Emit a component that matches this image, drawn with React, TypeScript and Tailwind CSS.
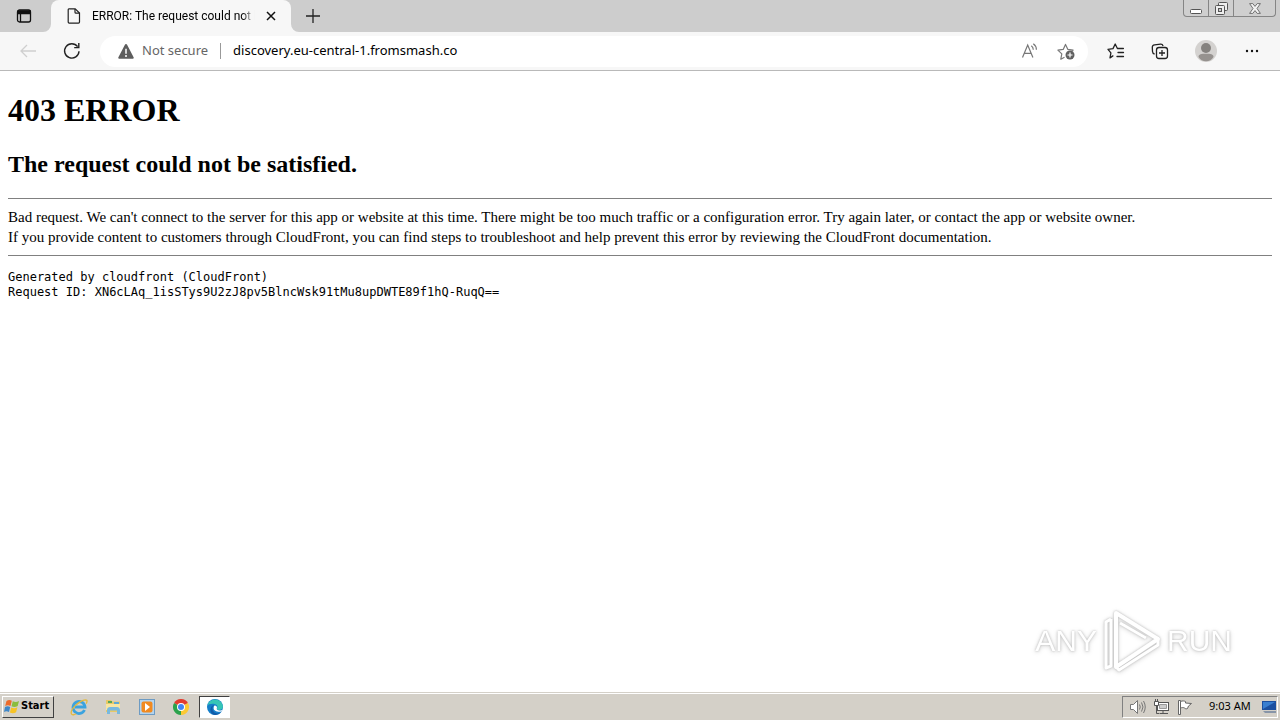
import type { ReactNode } from "react";

const uiFont = "font-['Noto_Sans','Open_Sans',sans-serif]";

function IconButton({ label, className, children }: { label: string; className: string; children: ReactNode }) {
  return (
    <button aria-label={label} className={`flex shrink-0 items-center justify-center ${className}`}>
      {children}
    </button>
  );
}

function TabStrip() {
  return (
    <header className="flex h-8 items-start bg-[#cdcdcd]">
      <IconButton label="Tab actions menu" className="h-8 w-[51px] rounded-br-lg pr-1">
        <svg width="16" height="16" viewBox="0 0 16 16" fill="none" stroke="#111" strokeWidth="1.3">
          <rect x="1.5" y="2" width="13" height="12" rx="2" />
          <path d="M2 3h12v2.5H2z" fill="#111" />
          <path d="M4.5 5v9" />
        </svg>
      </IconButton>
      <div className="relative flex h-8 w-60 items-center rounded-t-lg bg-[#f7f7f7] pr-3 pl-4">
        <svg className="absolute bottom-0 -left-2" width="8" height="8" viewBox="0 0 8 8"><path d="M8 0v8H0a8 8 0 0 0 8-8z" fill="#f7f7f7" /></svg>
        <svg className="absolute -right-2 bottom-0" width="8" height="8" viewBox="0 0 8 8"><path d="M0 0v8h8a8 8 0 0 1-8-8z" fill="#f7f7f7" /></svg>
        <svg className="shrink-0" width="14" height="16" viewBox="0 0 14 16" fill="none" stroke="#222" strokeWidth="1.2">
          <path d="M2.500 .8h5.700l4.300 4.300v9a1 1 0 0 1-1 1H2.200a1 1 0 0 1-1-1V1.800a1 1 0 0 1 1.300-1z" />
          <path d="M8 1v3.200a1 1 0 0 0 1 1h3.400" />
        </svg>
        <span className="ml-[11px] w-[167px] overflow-hidden font-['Roboto',sans-serif] text-xs whitespace-nowrap text-black [mask-image:linear-gradient(to_right,black_92%,transparent)]">
          ERROR: The request could not be satisfied
        </span>
        <IconButton label="Close tab" className="ml-2 size-4">
          <svg width="10" height="10" viewBox="0 0 10 10" stroke="#111" strokeWidth="1.5"><path d="M1 1l8 8M9 1L1 9" /></svg>
        </IconButton>
      </div>
      <IconButton label="New tab" className="h-8 w-11">
        <svg width="14" height="14" viewBox="0 0 14 14" stroke="#222" strokeWidth="1.3"><path d="M7 0v14M0 7h14" /></svg>
      </IconButton>
      <div className="mr-1 ml-auto flex h-[17px] overflow-hidden rounded-b border border-t-0 border-[#858585] bg-[#cfcfcf]">
        <IconButton label="Minimize" className="w-[25px] border-r border-[#858585]">
          <svg width="13" height="15" viewBox="0 0 13 15" fill="#fff" stroke="#555"><rect x=".5" y="8.5" width="11" height="4" rx="1" /></svg>
        </IconButton>
        <IconButton label="Restore" className="w-[25px] border-r border-[#858585]">
          <svg width="13" height="13" viewBox="0 0 13 13" fill="#eee" stroke="#555">
            <rect x="3.5" y=".5" width="9" height="8" rx="1" />
            <rect x=".5" y="3.5" width="9" height="9" rx="1" />
            <rect x="3.5" y="6.5" width="3" height="3" fill="#ccc" />
          </svg>
        </IconButton>
        <IconButton label="Close" className="w-[41px]">
          <svg width="12" height="11" viewBox="0 0 12 11" fill="#f2f2f2" stroke="#666" strokeWidth=".9">
            <path d="M.6.6h3.2L6 3.4 8.2.6h3.2L8 5.5l3.4 4.9H8.2L6 7.6l-2.2 2.8H.6L4 5.5z" />
          </svg>
        </IconButton>
      </div>
    </header>
  );
}

function Toolbar() {
  return (
    <nav className="flex h-[39px] items-center border-b border-[#b9b9b9] bg-[#f7f7f7] pr-1.5">
      <IconButton label="Back" className="ml-1.5 h-8 w-11">
        <svg width="16" height="14" viewBox="0 0 16 14" fill="none" stroke="#cfcfcf" strokeWidth="1.3"><path d="M16 7H1M7 1L1 7l6 6" /></svg>
      </IconButton>
      <IconButton label="Refresh" className="h-8 w-11">
        <svg width="18" height="18" viewBox="0 0 18 18" fill="none" stroke="#222" strokeWidth="1.4"><path d="M16 9.2A7.2 7.2 0 1 1 14.6 4.6" /><path d="M15.8 1v4.6h-4.6" /></svg>
      </IconButton>
      <div className="ml-1.5 flex h-[31px] min-w-0 flex-1 items-center rounded-full bg-white pr-1 pl-[18px]">
        <button className={`flex shrink-0 items-center gap-2 text-[13px] text-[#666] ${uiFont}`}>
          <svg width="16" height="15" viewBox="0 0 16 15">
            <path d="M6.9.8a1.2 1.2 0 0 1 2.2 0l6.5 12.4a1.1 1.1 0 0 1-1 1.6H1.4a1.1 1.1 0 0 1-1-1.6z" fill="#5d5d5d" />
            <path d="M8 4.8v5" stroke="#fff" strokeWidth="1.5" />
            <circle cx="8" cy="12" r="1" fill="#fff" />
          </svg>
          Not secure
        </button>
        <span className="mx-3 h-4 w-px shrink-0 bg-[#999]" />
        <input aria-label="Address" readOnly value="discovery.eu-central-1.fromsmash.co" className={`min-w-0 flex-1 bg-transparent text-[13px] text-black outline-none ${uiFont}`} />
        <IconButton label="Read aloud" className="w-9">
          <svg width="18" height="16" viewBox="0 0 18 16" fill="none" stroke="#777" strokeWidth="1.2">
            <path d="M1.5 14.5L6.7 2l5.2 12.5M3.2 10.4h7" />
            <path d="M10.3 2.8c1.3.9 2 2.200 2 3.900M12.300.7c2 1.400 3.100 3.500 3.100 6" />
          </svg>
        </IconButton>
        <IconButton label="Add to favorites" className="w-9">
          <svg width="18" height="18" viewBox="0 0 18 18" fill="none">
            <path d="M7.500 15.200l-3.700 2 1-5.300L.9 8.100l5.300-.7L8.500 2.400l2.400 5 5.200.7-1.200 1.200" stroke="#777" strokeWidth="1.2" strokeLinejoin="round" />
            <circle cx="13" cy="13" r="4.500" fill="#606060" />
            <path d="M13 10.500v5M10.500 13h5" stroke="#fff" strokeWidth="1.200" />
          </svg>
        </IconButton>
      </div>
      <IconButton label="Favorites" className="ml-1.5 h-8 w-11">
        <svg width="18" height="18" viewBox="0 0 18 18" fill="none" stroke="#222" strokeWidth="1.300" strokeLinejoin="round" strokeLinecap="round">
          <path d="M5.900 13.900l-2.900 2 .9-5.100L1 7.300l5-.7L8.200 2l2.200 4.500h6M11 10.500h5.500M10 14.500h6.500" />
        </svg>
      </IconButton>
      <IconButton label="Collections" className="h-8 w-11">
        <svg width="18" height="18" viewBox="0 0 18 18" fill="none" stroke="#222" strokeWidth="1.300">
          <path d="M3.600 12A2.500 2.500 0 0 1 1.500 9.600l-.2-4.200A2.500 2.500 0 0 1 3.600 2.800l6-.6c1.300-.1 2.100.6 2.500 1.800" />
          <rect x="5.500" y="5.500" width="11" height="11" rx="2.500" />
          <path d="M11 8v6M8 11h6" />
        </svg>
      </IconButton>
      <IconButton label="Profile" className="h-8 w-12">
        <svg width="22" height="22" viewBox="0 0 22 22">
          <circle cx="11" cy="11" r="11" fill="#d4d2d0" />
          <circle cx="11" cy="8" r="5" fill="#85827f" />
          <path d="M3.500 17c0-3 3-3.300 7.500-3.300s7.500.3 7.500 3.300c-1.500 2.800-4.300 4.300-7.500 4.300S5 19.800 3.500 17z" fill="#96928f" />
        </svg>
      </IconButton>
      <IconButton label="Settings and more" className="h-8 w-11">
        <svg width="14" height="4" viewBox="0 0 14 4" fill="#111"><circle cx="2" cy="2" r="1.200" /><circle cx="7" cy="2" r="1.200" /><circle cx="12" cy="2" r="1.200" /></svg>
      </IconButton>
    </nav>
  );
}

function Watermark() {
  return (
    <div className="absolute right-12 bottom-5 flex items-center gap-1.5 font-['Liberation_Sans',sans-serif] text-[30px] leading-none text-white [filter:drop-shadow(0_0_1px_#bbb)_drop-shadow(0_1px_2px_#ddd)]">
      <span>ANY</span>
      <svg width="58" height="62" viewBox="0 0 58 62" fill="none" stroke="#fff" strokeWidth="4" strokeLinejoin="round">
        <path d="M13 3l42 26-42 28z" />
        <path d="M8 9L3 12v46l5-2V9M17 13l26 15M13 57l3 3 39-25v-6" strokeWidth="3" />
      </svg>
      <span>RUN</span>
    </div>
  );
}

function ErrorPage() {
  return (
    <main className="relative flex-1 bg-white px-2 font-['Liberation_Serif',serif] text-[15px] leading-5 text-black">
      <h1 className="pt-[21px] text-[32px] leading-[37px] font-bold">403 ERROR</h1>
      <h2 className="mt-[21px] text-2xl leading-7 font-bold">The request could not be satisfied.</h2>
      <hr className="mt-5 mb-2 border-[#808080]" />
      <p>
        Bad request. We can't connect to the server for this app or website at this time. There might be too much traffic or a configuration error. Try again later, or contact the app or website owner.
        <br />
        If you provide content to customers through CloudFront, you can find steps to troubleshoot and help prevent this error by reviewing the CloudFront documentation.
      </p>
      <hr className="mt-2 mb-[14px] border-[#808080]" />
      <pre className="font-['DejaVu_Sans_Mono',monospace] text-xs leading-[15px]">{"Generated by cloudfront (CloudFront)\nRequest ID: XN6cLAq_1isSTys9U2zJ8pv5BlncWsk91tMu8upDWTE89f1hQ-RuqQ=="}</pre>
      <Watermark />
    </main>
  );
}

function Taskbar() {
  return (
    <footer className="flex h-7 items-center border-t border-[#d4d0c8] bg-[#d4d0c8] shadow-[inset_0_1px_0_#fff]">
      <button className="ml-0.5 flex h-[22px] w-[52px] items-center gap-px border border-t-white border-r-[#404040] border-b-[#404040] border-l-white pl-px font-['DejaVu_Sans_Condensed','DejaVu_Sans',sans-serif] text-[11px] font-bold text-black">
        <svg className="shrink-0" width="16" height="15" viewBox="0 0 16 15">
          <path d="M2.500 2C4.500.8 6 .8 7.800 1.800L6.500 7C4.700 6 3 6 1.200 7z" fill="#ed6b2b" />
          <path d="M8.800 2.200c2 1 4 1 6.200-.2L13.700 7c-2.200 1.300-4 1.300-6.200.3z" fill="#8bbd3e" />
          <path d="M1 8c1.800-1 3.400-1 5.200 0L5 13c-1.800-1-3.400-1-5 0z" fill="#3f87c8" />
          <path d="M7.200 8.400c2.200 1 4 1 6.200-.2l-1.300 5c-2.200 1.200-4 1.200-6.200.2z" fill="#f7c325" />
        </svg>
        Start
      </button>
      <div className="ml-2 flex items-center">
        <IconButton label="Internet Explorer" className="h-[22px] w-[34px]">
          <svg width="18" height="18" viewBox="0 0 18 18" fill="none">
            <path d="M14.500 12a6 6 0 1 1 .5-3H5" stroke="#3ba3df" strokeWidth="2.800" />
            <path d="M1.500 16C-.5 12 9 2.500 15.500 1.800c2.500 0 1.300 2.700.7 3.800M1.500 16c.8 1.500 3 .6 4.500-.3" stroke="#e5b93c" strokeWidth="1.300" />
          </svg>
        </IconButton>
        <IconButton label="File Explorer" className="h-[22px] w-[34px]">
          <svg width="17" height="17" viewBox="0 0 17 17">
            <path d="M1 2h5l1.500 1.500H15V14H1z" fill="#e8c967" />
            <path d="M3 3h4v2H3z" fill="#58a659" /><path d="M9 4h5v2H9z" fill="#5fa9d5" />
            <path d="M1 6h14v6H1z" fill="#f8e6a2" />
            <path d="M2 16v-4c0-2 1.500-3 3-3h7c1.500 0 3 1 3 3v4h-3v-3.500H5V16z" fill="#78b9df" />
          </svg>
        </IconButton>
        <IconButton label="Media Player" className="h-[22px] w-[34px]">
          <svg width="16" height="16" viewBox="0 0 16 16">
            <rect x=".5" y=".5" width="15" height="15" fill="#b4d4ee" stroke="#6d9bc3" />
            <rect x="2.500" y="2.500" width="11" height="11" rx="2" fill="#f18a20" />
            <path d="M6 4l5 4-5 4z" fill="#fff" />
          </svg>
        </IconButton>
        <IconButton label="Chrome" className="h-[22px] w-[34px]">
          <svg width="16" height="16" viewBox="0 0 16 16">
            <path d="M8 8L1.070 4A8 8 0 0 1 14.930 4z" fill="#e33b2e" />
            <path d="M8 8V16A8 8 0 0 1 1.070 4z" fill="#2ba24c" />
            <path d="M8 8l6.930-4A8 8 0 0 1 8 16z" fill="#fcc934" />
            <circle cx="8" cy="8" r="4" fill="#fff" /><circle cx="8" cy="8" r="3" fill="#4285f4" />
          </svg>
        </IconButton>
        <IconButton label="Microsoft Edge" className="ml-px h-[22px] w-[31px] border border-t-[#404040] border-r-white border-b-white border-l-[#404040] bg-white">
          <svg width="16" height="16" viewBox="0 0 16 16">
            <circle cx="8" cy="8" r="8" fill="#147ec9" />
            <path d="M.2 7A8 8 0 0 1 15.900 7c.3 2.700-1.600 4-3.800 4-2 0-3-.9-2-2 .8-1.200.3-3.500-2.600-4C4 4.500 1 5.500.2 7z" fill="#36c5b6" />
            <path d="M7.500 6C5 7 4.600 10.500 7 13c2 2 5.600 1.800 7.500 0a8 8 0 0 1-6.500 3C4.500 15.500 3 12.500 3.500 10 4 7.500 5.800 6 7.500 6z" fill="#105ba8" />
            <path d="M7.500 6.500c2 0 3 1.500 2.300 2.800-.5 1.200.7 2.200 2.700 2.200 1.500 0 2.500-.4 3.200-1.100-.5 1.600-1.700 2.400-3.300 2.400-3.200 0-5.800-1.300-5.800-3.800 0-1.100.4-2 .9-2.500z" fill="#fff" />
          </svg>
        </IconButton>
      </div>
      <div className="mr-0.5 ml-auto flex h-[22px] w-[156px] items-center border border-t-[#808080] border-r-white border-b-white border-l-[#808080] pl-1">
        <IconButton label="Volume" className="w-5">
          <svg width="17" height="16" viewBox="0 0 17 16" fill="none" stroke="#777">
            <path d="M1.500 5.500h3l4-4v13l-4-4h-3z" fill="#fff" /><path d="M10.500 5.500q1.500 2.500 0 5M12.500 3.500q3 4.500 0 9M14.500 2q3.500 6 0 12" />
          </svg>
        </IconButton>
        <IconButton label="Network" className="ml-1 w-5">
          <svg width="17" height="16" viewBox="0 0 17 16" fill="#fff" stroke="#555">
            <rect x="4.500" y="3.500" width="11" height="8" /><path d="M6.500 5.500h7v4h-7z" fill="#ccc" stroke="#999" /><path d="M7 14.500h8M10 12v2M3.500 7v7.500h3" fill="none" /><path d="M1.500 2.500h4v4h-4zM2.500 0v2M4.500 0v2" />
          </svg>
        </IconButton>
        <IconButton label="Action Center" className="ml-1 w-5">
          <svg width="17" height="16" viewBox="0 0 17 16" fill="#fff" stroke="#666">
            <path d="M1.500 1.500h2v14h-2z" /><path d="M3.500 2.500c2-1 4-.5 5 0v1.500l6 .5-3 2.500-1 2.500c-1 .5-2 .5-3-.5-1-.7-2.500-.5-4 0z" />
          </svg>
        </IconButton>
        <time className={`ml-[14px] text-[11px] whitespace-nowrap text-black ${uiFont}`}>9:03 AM</time>
        <IconButton label="Show desktop" className="ml-auto w-4">
          <svg width="15" height="14" viewBox="0 0 15 14">
            <path d="M0 1h14v9H0z" fill="#1c50a0" /><path d="M1 2h12L1 9z" fill="#397fd0" /><path d="M1 11h13v2H3z" fill="#8795a8" />
          </svg>
        </IconButton>
      </div>
    </footer>
  );
}

export default function App() {
  return (
    <div className="flex min-h-screen flex-col bg-white">
      <TabStrip />
      <Toolbar />
      <ErrorPage />
      <Taskbar />
    </div>
  );
}
